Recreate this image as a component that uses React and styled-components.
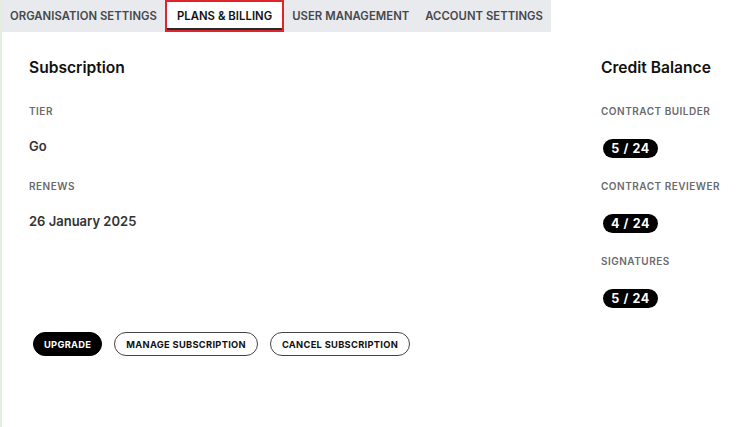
import React from 'react';
import styled, { createGlobalStyle } from 'styled-components';

const Global = createGlobalStyle`
  html, body {
    margin: 0;
    padding: 0;
    background: #fff;
    font-family: Inter, "Open Sans", sans-serif;
  }
`;

const Page = styled.div`
  width: 747px;
  height: 427px;
  box-sizing: border-box;
  border-left: 2px solid #e3eedd;
  overflow: hidden;
`;

const TabBar = styled.div`
  display: flex;
  width: fit-content;
  height: 32px;
  background: #e9eaed;
`;

const Tab = styled.div`
  display: flex;
  align-items: center;
  box-sizing: border-box;
  height: 32px;
  padding: ${p => (p.active ? '0 10px' : '0 8px')};
  font-size: 11.3px;
  font-weight: 600;
  letter-spacing: 0.05px;
  color: ${p => (p.active ? '#111' : '#45474d')};
  background: ${p => (p.active ? '#fff' : 'transparent')};
  border: ${p => (p.active ? '2px solid #e0242c' : 'none')};
  box-shadow: ${p => (p.active ? 'inset 0 -2px 0 #2a2a2a' : 'none')};
  white-space: nowrap;
`;

const Body = styled.div`
  display: grid;
  grid-template-columns: 572px 1fr;
  padding: 26px 0 0 27px;
`;

const Column = styled.div`
  display: flex;
  flex-direction: column;
`;

const Heading = styled.h2`
  margin: 0 0 26px;
  height: 20px;
  line-height: 20px;
  font-size: 15.6px;
  font-weight: 600;
  color: #111;
`;

const Label = styled.div`
  height: 14px;
  line-height: 14px;
  font-size: 10px;
  font-weight: 600;
  letter-spacing: 0.5px;
  color: #6a6a6d;
  text-transform: uppercase;
`;

const Value = styled.div`
  margin: 19px 0 24px;
  height: 18px;
  line-height: 18px;
  font-size: 13px;
  font-weight: 600;
  color: #333;
`;

const Pill = styled.span`
  align-self: flex-start;
  display: inline-flex;
  align-items: center;
  justify-content: center;
  margin: 21px 0 21px 2px;
  width: 55px;
  height: 19px;
  border-radius: 10px;
  background: #000;
  color: #fff;
  font-size: 12.5px;
  font-weight: 700;
  letter-spacing: 0.6px;
  &:last-child { margin-bottom: 0; }
`;

const Actions = styled.div`
  display: flex;
  gap: 12px;
  padding: 24px 0 0 31px;
`;

const Button = styled.button`
  height: 24px;
  padding: 0 ${p => (p.primary ? '10px' : '11px')};
  border-radius: 12px;
  border: 1px solid ${p => (p.primary ? '#000' : '#444')};
  background: ${p => (p.primary ? '#000' : '#fff')};
  color: ${p => (p.primary ? '#fff' : '#111')};
  font-family: Inter, sans-serif;
  font-size: 9.3px;
  font-weight: 700;
  letter-spacing: 0.3px;
  cursor: pointer;
`;

const tabs = ['Organisation Settings', 'Plans & Billing', 'User Management', 'Account Settings'];

const credits = [
  { label: 'Contract Builder', used: 5, total: 24 },
  { label: 'Contract Reviewer', used: 4, total: 24 },
  { label: 'Signatures', used: 5, total: 24 },
];

export default function App() {
  return (
    <Page>
      <Global />
      <TabBar>
        {tabs.map(t => (
          <Tab key={t} active={t === 'Plans & Billing'}>{t.toUpperCase()}</Tab>
        ))}
      </TabBar>
      <Body>
        <Column>
          <Heading>Subscription</Heading>
          <Label>Tier</Label>
          <Value>Go</Value>
          <Label>Renews</Label>
          <Value>26 January 2025</Value>
        </Column>
        <Column>
          <Heading>Credit Balance</Heading>
          {credits.map(c => (
            <React.Fragment key={c.label}>
              <Label>{c.label}</Label>
              <Pill>{c.used} / {c.total}</Pill>
            </React.Fragment>
          ))}
        </Column>
      </Body>
      <Actions>
        <Button primary>UPGRADE</Button>
        <Button>MANAGE SUBSCRIPTION</Button>
        <Button>CANCEL SUBSCRIPTION</Button>
      </Actions>
    </Page>
  );
}
